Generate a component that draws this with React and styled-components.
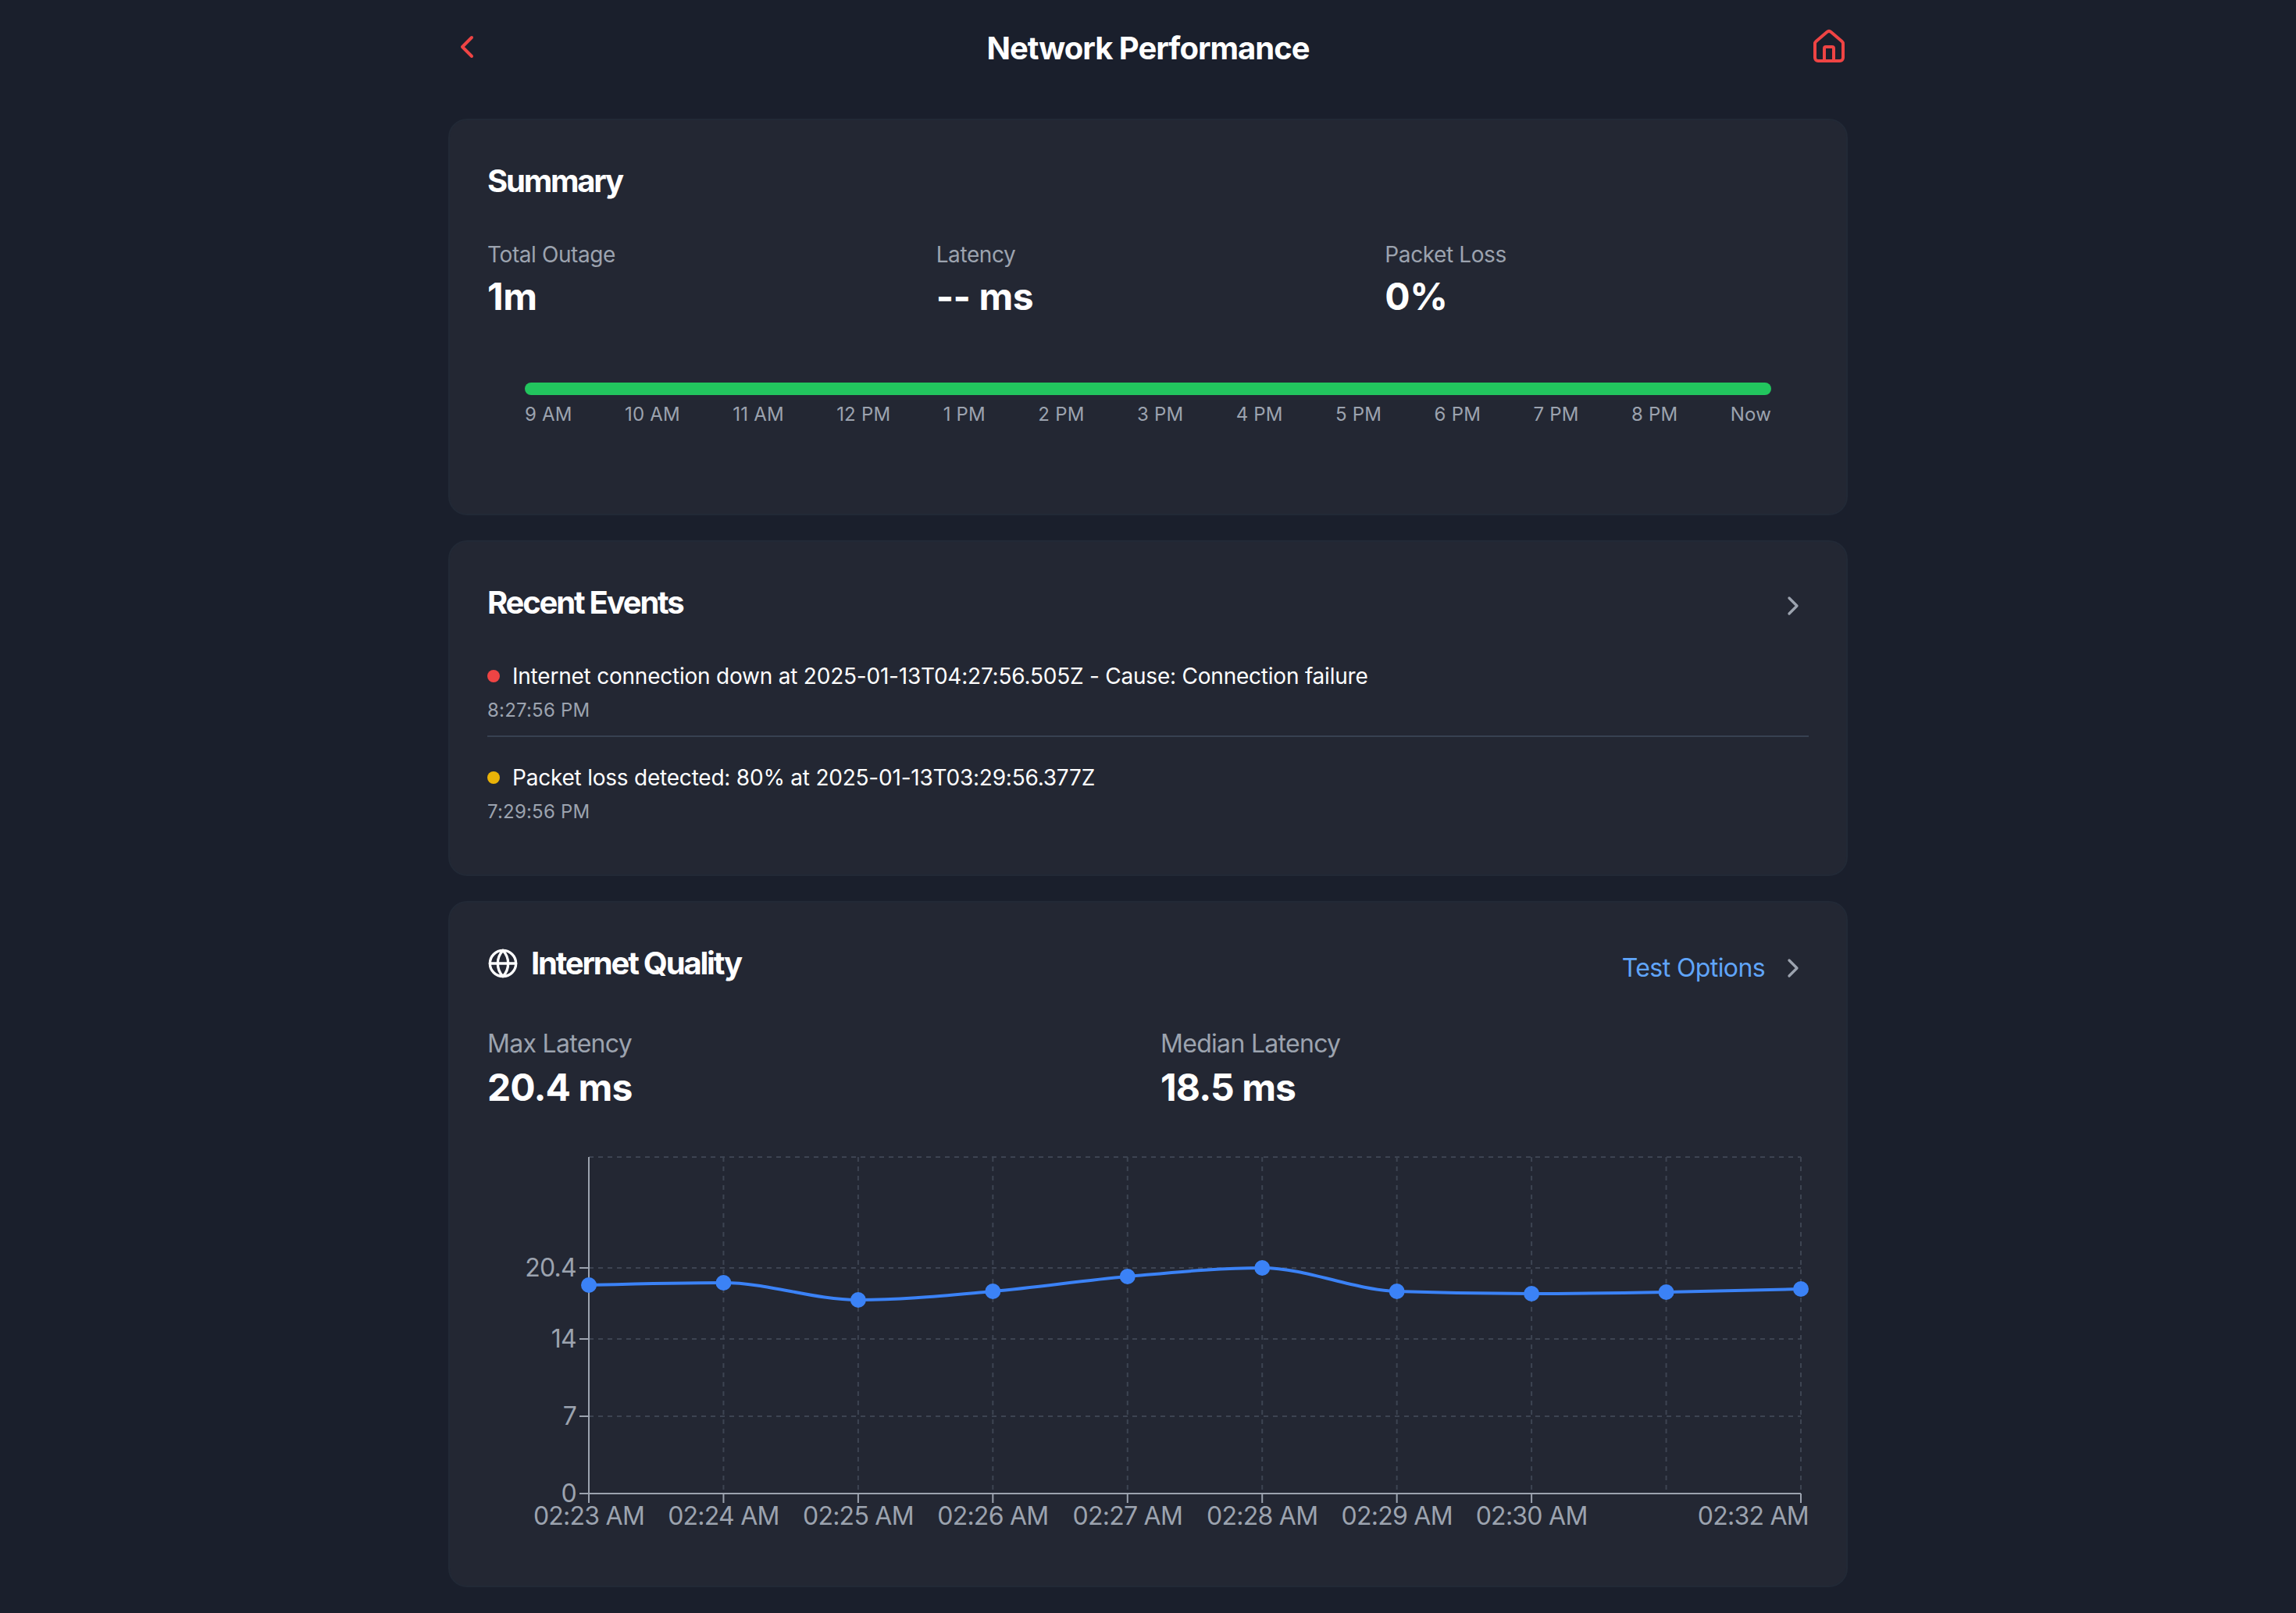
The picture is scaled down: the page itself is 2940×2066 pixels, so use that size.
import React from 'react'
import styled, { createGlobalStyle } from 'styled-components'
import { ChevronLeft, ChevronRight, Globe, House } from 'lucide-react'

const GlobalStyle = createGlobalStyle`
  * { box-sizing: border-box; }
  body {
    margin: 0;
    background: #1a1f2c;
    color: #fff;
    font-family: Inter, "Liberation Sans", sans-serif;
  }
`

const Page = styled.main`
  width: 1792px;
  min-height: 2066px;
  margin: 0 auto;
`

const Header = styled.header`
  display: flex;
  align-items: center;
  justify-content: space-between;
  padding: 36px 0;
  margin-bottom: 32px;
  color: #ef4444;
`

const PageTitle = styled.h1`
  margin: 0;
  padding-top: 3px;
  font-size: 40px;
  line-height: 45px;
  font-weight: 700;
  letter-spacing: -1px;
  color: #fff;
`

const Card = styled.section`
  background: #232733;
  border: 2px solid #222936;
  border-radius: 24px;
  padding: 48px;
  margin-bottom: 32px;
`

const CardHead = styled.div`
  display: flex;
  justify-content: space-between;
  align-items: flex-start;
  margin-bottom: ${(p) => p.$gap}px;
`

const CardTitle = styled.h2`
  display: flex;
  align-items: center;
  gap: 16px;
  margin: 0;
  font-size: 40px;
  line-height: 60px;
  font-weight: 700;
  letter-spacing: -2.2px;
  color: #fff;
`

const HeadAction = styled.div`
  display: flex;
  align-items: center;
  gap: 16px;
  margin-top: ${(p) => p.$top}px;
  color: #9ca3af;
`

const TestLink = styled.span`
  font-size: 32px;
  line-height: 40px;
  letter-spacing: -0.6px;
  color: #60a5fa;
`

const StatGrid = styled.div`
  display: grid;
  grid-template-columns: repeat(${(p) => p.$cols}, 1fr);
  gap: 32px;
`

const StatLabel = styled.div`
  font-size: ${(p) => (p.$large ? 32 : 28)}px;
  line-height: ${(p) => (p.$large ? 48 : 40)}px;
  letter-spacing: ${(p) => (p.$large ? -0.7 : -0.4)}px;
  color: #9ca3af;
`

const StatValue = styled.div`
  margin-top: ${(p) => (p.$large ? 4 : 6)}px;
  font-size: 48px;
  line-height: 56px;
  font-weight: 700;
  letter-spacing: ${(p) => (p.$large ? -0.9 : -0.5)}px;
  color: #fff;
`

const Timeline = styled.div`
  margin: 82px 48px 63px;
`

const TimelineBar = styled.div`
  height: 16px;
  border-radius: 8px;
  background: #22c55e;
`

const TimelineLabels = styled.div`
  display: flex;
  justify-content: space-between;
  margin-top: 9px;
  font-size: 24px;
  line-height: 32px;
  letter-spacing: 0.2px;
  color: #9ca3af;
`

const EventItem = styled.div`
  padding: ${(p) => (p.$first ? '0 0 16px' : '32px 0 16px')};
  border-bottom: ${(p) => (p.$last ? 'none' : '2px solid #374151')};
`

const EventText = styled.div`
  display: flex;
  align-items: center;
  gap: 16px;
  font-size: 28px;
  line-height: 40px;
  letter-spacing: -0.22px;
  color: #fff;
`

const Dot = styled.span`
  width: 16px;
  height: 16px;
  border-radius: 50%;
  background: ${(p) => p.$color};
`

const EventTime = styled.div`
  margin-top: 8px;
  font-size: 24px;
  line-height: 32px;
  letter-spacing: 0.2px;
  color: #9ca3af;
`

const ChartSvg = styled.svg`
  display: block;
  margin-top: 45px;
  font-family: Inter, "Liberation Sans", sans-serif;
  font-size: 32px;
  letter-spacing: -0.75px;
  overflow: visible;

  text { fill: #9ca3af; }
`

const hours = ['9 AM', '10 AM', '11 AM', '12 PM', '1 PM', '2 PM', '3 PM', '4 PM', '5 PM', '6 PM', '7 PM', '8 PM', 'Now']

const events = [
  { color: '#ef4444', text: 'Internet connection down at 2025-01-13T04:27:56.505Z - Cause: Connection failure', time: '8:27:56 PM' },
  { color: '#eab308', text: 'Packet loss detected: 80% at 2025-01-13T03:29:56.377Z', time: '7:29:56 PM' },
]

// chart coordinates, svg origin sits at the left of the card content
const LEFT = 130
const RIGHT = 1682
const TOP = 16
const BASE = 447
const STEP = (RIGHT - LEFT) / 9
const yTicks = [
  { label: '20.4', y: 158 },
  { label: '14', y: 249 },
  { label: '7', y: 348 },
  { label: '0', y: BASE },
]
const xLabels = ['02:23 AM', '02:24 AM', '02:25 AM', '02:26 AM', '02:27 AM', '02:28 AM', '02:29 AM', '02:30 AM', null, '02:32 AM']
const points = [180, 177, 199, 188, 169, 158, 188, 191, 189, 185].map((y, i) => ({ x: LEFT + STEP * i, y }))

// same curve recharts draws for type="monotone"
const monotonePath = (pts) => {
  const n = pts.length
  const slopes = pts.slice(0, -1).map((p, i) => (pts[i + 1].y - p.y) / (pts[i + 1].x - p.x))
  const t = pts.map((_, i) => {
    if (i === 0 || i === n - 1) return null
    const s0 = slopes[i - 1]
    const s1 = slopes[i]
    const h0 = pts[i].x - pts[i - 1].x
    const h1 = pts[i + 1].x - pts[i].x
    const m = (s0 * h1 + s1 * h0) / (h0 + h1)
    return (Math.sign(s0) + Math.sign(s1)) * Math.min(Math.abs(s0), Math.abs(s1), 0.5 * Math.abs(m)) || 0
  })
  t[0] = (3 * slopes[0] - t[1]) / 2
  t[n - 1] = (3 * slopes[n - 2] - t[n - 2]) / 2
  let d = `M${pts[0].x},${pts[0].y}`
  for (let i = 0; i < n - 1; i++) {
    const dx = (pts[i + 1].x - pts[i].x) / 3
    d += `C${pts[i].x + dx},${pts[i].y + dx * t[i]} ${pts[i + 1].x - dx},${pts[i + 1].y - dx * t[i + 1]} ${pts[i + 1].x},${pts[i + 1].y}`
  }
  return d
}

const QualityChart = () => (
  <ChartSvg width="1692" height="517" viewBox="0 0 1692 517">
    <g stroke="#3d4452" strokeWidth="2" strokeDasharray="6 6" fill="none">
      {[TOP, ...yTicks.slice(0, 3).map((t) => t.y)].map((y) => (
        <line key={y} x1={LEFT} x2={RIGHT} y1={y} y2={y} />
      ))}
      {points.map((p) => (
        <line key={p.x} x1={p.x} x2={p.x} y1={TOP} y2={BASE} />
      ))}
    </g>
    <g stroke="#9ca3af" strokeWidth="2">
      <line x1={LEFT} x2={LEFT} y1={TOP} y2={BASE} />
      <line x1={LEFT} x2={RIGHT} y1={BASE} y2={BASE} />
      {yTicks.map((t) => (
        <line key={t.label} x1={LEFT - 12} x2={LEFT} y1={t.y} y2={t.y} />
      ))}
      {points.map((p, i) => xLabels[i] && (
        <line key={p.x} x1={p.x} x2={p.x} y1={BASE} y2={BASE + 12} />
      ))}
    </g>
    {yTicks.map((t) => (
      <text key={t.label} x={LEFT - 16} y={t.y + 11} textAnchor="end">{t.label}</text>
    ))}
    {points.map((p, i) => xLabels[i] && (
      <text
        key={p.x}
        x={i === 9 ? 1692 : p.x}
        y={BASE + 40}
        textAnchor={i === 9 ? 'end' : 'middle'}
      >
        {xLabels[i]}
      </text>
    ))}
    <path d={monotonePath(points)} fill="none" stroke="#3b82f6" strokeWidth="4" />
    {points.map((p) => (
      <circle key={p.x} cx={p.x} cy={p.y} r="10" fill="#3b82f6" />
    ))}
  </ChartSvg>
)

const App = () => (
  <Page>
    <GlobalStyle />
    <Header>
      <ChevronLeft size={48} />
      <PageTitle>Network Performance</PageTitle>
      <House size={48} />
    </Header>

    <Card>
      <CardHead $gap={44}>
        <CardTitle>Summary</CardTitle>
      </CardHead>
      <StatGrid $cols={3}>
        <div>
          <StatLabel>Total Outage</StatLabel>
          <StatValue>1m</StatValue>
        </div>
        <div>
          <StatLabel>Latency</StatLabel>
          <StatValue>-- ms</StatValue>
        </div>
        <div>
          <StatLabel>Packet Loss</StatLabel>
          <StatValue>0%</StatValue>
        </div>
      </StatGrid>
      <Timeline>
        <TimelineBar />
        <TimelineLabels>
          {hours.map((h) => <span key={h}>{h}</span>)}
        </TimelineLabels>
      </Timeline>
    </Card>

    <Card>
      <CardHead $gap={44}>
        <CardTitle>Recent Events</CardTitle>
        <HeadAction $top={14}><ChevronRight size={40} /></HeadAction>
      </CardHead>
      {events.map((e, i) => (
        <EventItem key={e.time} $first={i === 0} $last={i === events.length - 1}>
          <EventText><Dot $color={e.color} />{e.text}</EventText>
          <EventTime>{e.time}</EventTime>
        </EventItem>
      ))}
    </Card>

    <Card>
      <CardHead $gap={49}>
        <CardTitle><Globe size={40} />Internet Quality</CardTitle>
        <HeadAction $top={16}>
          <TestLink>Test Options</TestLink>
          <ChevronRight size={40} />
        </HeadAction>
      </CardHead>
      <StatGrid $cols={2}>
        <div>
          <StatLabel $large>Max Latency</StatLabel>
          <StatValue $large>20.4 ms</StatValue>
        </div>
        <div>
          <StatLabel $large>Median Latency</StatLabel>
          <StatValue $large>18.5 ms</StatValue>
        </div>
      </StatGrid>
      <QualityChart />
    </Card>
  </Page>
)

export default App
